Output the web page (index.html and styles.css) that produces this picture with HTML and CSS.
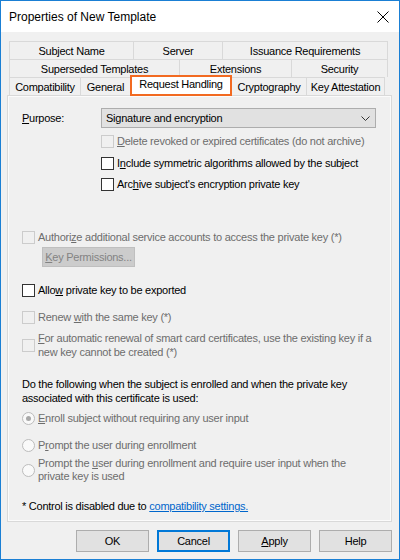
FILE: index.html
```html
<!DOCTYPE html>
<html>
<head>
<meta charset="utf-8">
<link rel="stylesheet" href="styles.css">
</head>
<body>
<div class="window">
  <div class="titlebar">
    <span class="title">Properties of New Template</span>
    <svg class="close" width="12" height="12" viewBox="0 0 12 12"><path d="M0.5 0.5 L11.5 11.5 M11.5 0.5 L0.5 11.5" stroke="#000" stroke-width="1" fill="none"/></svg>
  </div>
  <div class="client">
    <div class="tabs">
      <div class="tabrow">
        <div class="tab" style="width:124px">Subject Name</div>
        <div class="tab" style="width:89px">Server</div>
        <div class="tab" style="width:166px">Issuance Requirements</div>
      </div>
      <div class="tabrow">
        <div class="tab" style="width:170px">Superseded Templates</div>
        <div class="tab" style="width:112px">Extensions</div>
        <div class="tab" style="width:97px">Security</div>
      </div>
      <div class="tabrow">
        <div class="tab" style="width:71px">Compatibility</div>
        <div class="tab" style="width:50px">General</div>
        <div class="tab active" style="width:102px">Request Handling</div>
        <div class="tab" style="width:74px">Cryptography</div>
        <div class="tab" style="width:79px">Key Attestation</div>
      </div>
    </div>
    <div class="panel">
      <div class="purpose">
        <span class="plabel"><u>P</u>urpose:</span>
        <div class="select">
          <span>Signature and encryption</span>
          <svg class="chev" width="9" height="5" viewBox="0 0 9 5"><path d="M0.5 0.5 L4.5 4.5 L8.5 0.5" stroke="#333" stroke-width="1" fill="none"/></svg>
        </div>
      </div>
      <div class="sub">
        <label class="check disabled r1"><span class="box"></span><span><u>D</u>elete revoked or expired certificates (do not archive)</span></label>
        <label class="check r2"><span class="box"></span><span>I<u>n</u>clude symmetric algorithms allowed by the subject</span></label>
        <label class="check r3"><span class="box"></span><span>Arc<u>h</u>ive subject's encryption private key</span></label>
      </div>
      <label class="check disabled r4"><span class="box"></span><span>Authori<u>z</u>e additional service accounts to access the private key (*)</span></label>
      <div class="keyperm"><u>K</u>ey Permissions...</div>
      <label class="check r5"><span class="box"></span><span>Allo<u>w</u> private key to be exported</span></label>
      <label class="check disabled r6"><span class="box"></span><span>Renew <u>w</u>ith the same key (*)</span></label>
      <label class="check disabled two r7"><span class="box"></span><span><u>F</u>or automatic renewal of smart card certificates, use the existing key if a<br>new key cannot be created (*)</span></label>
      <p class="desc">Do the following when the subject is enrolled and when the private key<br>associated with this certificate is used:</p>
      <label class="radio disabled on q1"><span class="dot"></span><span><u>E</u>nroll subject without requiring any user input</span></label>
      <label class="radio disabled q2"><span class="dot"></span><span>P<u>r</u>ompt the user during enrollment</span></label>
      <label class="radio disabled two q3"><span class="dot"></span><span>Prompt the <u>u</u>ser during enrollment and require user input when the<br>private key is used</span></label>
      <p class="note">* Control is disabled due to <a class="link">compatibility settings.</a></p>
    </div>
    <div class="buttons">
      <div class="btn">OK</div>
      <div class="btn default">Cancel</div>
      <div class="btn"><u>A</u>pply</div>
      <div class="btn">Help</div>
    </div>
  </div>
</div>
</body>
</html>
```
FILE: styles.css
```css
* { box-sizing: border-box; }
html, body { margin: 0; padding: 0; }
body {
  width: 400px;
  height: 560px;
  font-family: "Liberation Sans", Arial, sans-serif;
  font-size: 11px;
  letter-spacing: -0.25px;
  color: #000;
  background: #f0f0f0;
  white-space: nowrap;
}
.window {
  width: 400px;
  height: 560px;
  border: 1px solid #1a7fd4;
  display: flex;
  flex-direction: column;
  background: #f0f0f0;
}
.titlebar {
  height: 31px;
  flex: none;
  background: #fff;
  display: flex;
  align-items: center;
  justify-content: space-between;
  padding: 0 10px 0 8px;
}
.title { font-size: 12px; letter-spacing: 0; }
.close { display: block; }
.client {
  flex: 1;
  padding: 9px 7px 0 6px;
}
.tabs {
  padding-left: 2px;
  display: flex;
  flex-direction: column;
}
.tabrow {
  display: flex;
  height: 18px;
}
.tab {
  flex: none;
  height: 18px;
  border: 1px solid #d9d9d9;
  border-right: none;
  border-bottom: none;
  background: #f0f0f0;
  text-align: center;
  line-height: 18px;
  overflow: hidden;
}
.tabrow .tab:last-child { border-right: 1px solid #d9d9d9; }
.tab.active {
  position: relative;
  height: 21px;
  margin-top: -2px;
  margin-bottom: -1px;
  background: #fff;
  border: 2px solid #f26a21;
  line-height: 15px;
  z-index: 2;
}
.tab.active + .tab { border-left: none; }
.panel {
  height: 427px;
  border: 1px solid #d9d9d9;
  box-shadow: inset 0 0 0 1px #fbfbfb;
  background: #f0f0f0;
  padding: 12px 14px 0 14px;
}
.purpose {
  display: flex;
  align-items: center;
  height: 20px;
}
.plabel { width: 79px; flex: none; }
.select {
  width: 275px;
  height: 20px;
  background: #e1e1e1;
  border: 1px solid #adadad;
  display: flex;
  align-items: center;
  justify-content: space-between;
  padding: 0 5px 0 4px;
}
.chev { display: block; }
.sub { padding-left: 79px; }
.check, .radio {
  display: flex;
  align-items: center;
  line-height: 14px;
}
.check .box {
  width: 13px;
  height: 13px;
  flex: none;
  border: 1px solid #333;
  background: #fff;
  margin-right: 3px;
}
.check.disabled .box { border-color: #cccccc; background: #f0f0f0; }
.disabled { color: #6d6d6d; }
.r1 { margin-top: 6px; }
.r2 { margin-top: 8px; }
.r3 { margin-top: 7px; }
.r4 { margin-top: 39px; }
.keyperm {
  margin: 3px 0 0 20px;
  width: 93px;
  height: 20px;
  background: #cccccc;
  border: 1px solid #bfbfbf;
  color: #838383;
  display: flex;
  align-items: center;
  justify-content: center;
}
.r5 { margin-top: 16px; }
.r6 { margin-top: 13px; }
.r7 { margin-top: 7px; }
.desc { margin: 18px 0 0; line-height: 14px; }
.radio .dot {
  width: 13px;
  height: 13px;
  flex: none;
  border-radius: 50%;
  border: 1px solid #bcbcbc;
  background: #fff;
  margin-right: 3px;
  position: relative;
}
.radio.on .dot::after {
  content: "";
  position: absolute;
  left: 3px;
  top: 3px;
  width: 5px;
  height: 5px;
  border-radius: 50%;
  background: #a8a8a8;
}
.radio.disabled .dot { background: #f9f9f9; }
.q1 { margin-top: 6px; }
.q2 { margin-top: 13px; }
.q3 { margin-top: 5px; line-height: 13px; }
.note { margin: 16px 0 0; line-height: 14px; }
.link { color: #0066cc; text-decoration: underline; }
.buttons {
  display: flex;
  justify-content: flex-end;
  gap: 8px;
  margin-top: 8px;
}
.btn {
  width: 73px;
  height: 22px;
  background: #e1e1e1;
  border: 1px solid #adadad;
  display: flex;
  align-items: center;
  justify-content: center;
}
.btn.default { border: 2px solid #0078d7; }
u { text-decoration: underline; }
```
